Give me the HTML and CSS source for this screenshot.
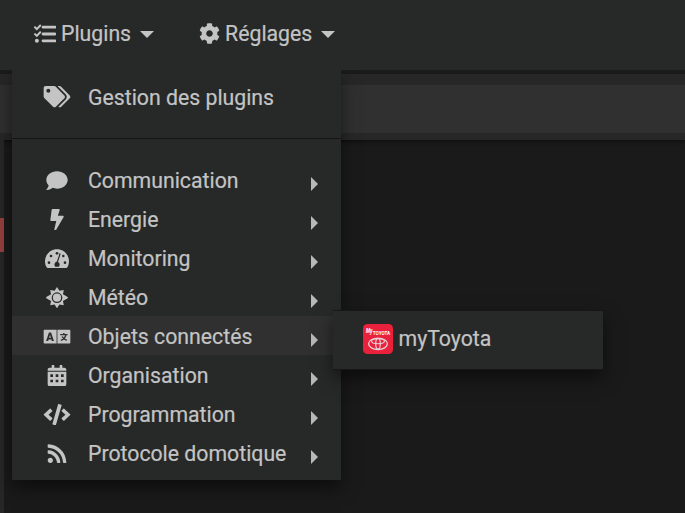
FILE: index.html
```html
<!DOCTYPE html>
<html lang="fr">
<head>
<meta charset="utf-8">
<title>Plugins</title>
<link rel="stylesheet" href="styles.css">
</head>
<body>
<header class="navbar">
  <div class="nav-item">
    <svg class="nav-icon list" viewBox="0 0 22 20"><path d="M9 3.2h12M9 10h12M9 16.8h12" stroke-width="2.8" stroke-linecap="round"/><path d="M1 3.3l1.8 1.8L6.2 1.5M1 10.1l1.8 1.8 3.4-3.6" stroke-width="2" stroke-linecap="round"/><circle cx="2.9" cy="16.8" r="2" class="solid"/></svg>
    <span class="nav-label">Plugins</span><i class="caret"></i>
  </div>
  <div class="nav-item settings">
    <svg class="nav-icon cog" viewBox="0 0 512 512"><path class="solid" d="M487.4 315.7l-42.6-24.6c4.3-23.2 4.3-47 0-70.2l42.6-24.6c4.9-2.8 7.1-8.6 5.5-14-11.1-35.6-30-67.8-54.7-94.6-3.8-4.1-10-5.1-14.8-2.3L380.8 110c-17.9-15.4-38.5-27.3-60.8-35.1V25.8c0-5.6-3.9-10.5-9.4-11.7-36.7-8.2-74.3-7.8-109.2 0-5.5 1.2-9.4 6.1-9.4 11.7V75c-22.2 7.9-42.8 19.8-60.8 35.1L88.7 85.5c-4.9-2.8-11-1.9-14.8 2.3-24.7 26.7-43.6 58.9-54.7 94.6-1.7 5.4.6 11.2 5.5 14L67.3 221c-4.3 23.2-4.3 47 0 70.2l-42.6 24.6c-4.9 2.8-7.1 8.6-5.5 14 11.1 35.6 30 67.8 54.7 94.6 3.8 4.1 10 5.1 14.8 2.3l42.6-24.6c17.9 15.4 38.5 27.3 60.8 35.1v49.2c0 5.6 3.9 10.5 9.4 11.7 36.7 8.2 74.3 7.8 109.2 0 5.5-1.2 9.4-6.1 9.4-11.7v-49.2c22.2-7.9 42.8-19.8 60.8-35.1l42.6 24.6c4.9 2.8 11 1.9 14.8-2.3 24.7-26.7 43.6-58.9 54.7-94.6 1.5-5.5-.7-11.3-5.6-14.1zM256 336c-44.1 0-80-35.9-80-80s35.9-80 80-80 80 35.9 80 80-35.9 80-80 80z"/></svg>
    <span class="nav-label">Réglages</span><i class="caret"></i>
  </div>
</header>
<div class="toolbar"></div>
<main class="content"><aside class="rail"><div class="alert"></div></aside></main>

<nav class="menu">
  <div class="item manage">
    <svg class="icon" viewBox="0 0 640 512"><path d="M497.941 225.941L286.059 14.059A48 48 0 0 0 252.118 0H48C21.49 0 0 21.49 0 48v204.118a48 48 0 0 0 14.059 33.941l211.882 211.882c18.744 18.745 49.136 18.746 67.882 0l204.118-204.118c18.745-18.745 18.745-49.137 0-67.882zM112 160c-26.51 0-48-21.49-48-48s21.49-48 48-48 48 21.49 48 48-21.49 48-48 48zm513.941 133.823L421.823 497.941c-18.745 18.745-49.137 18.745-67.882 0l-.36-.36L527.64 323.522c16.999-16.999 26.36-39.6 26.36-63.64s-9.362-46.641-26.36-63.64L331.397 0h48.721a48 48 0 0 1 33.941 14.059l211.882 211.882c18.745 18.745 18.745 49.137 0 67.882z"/></svg>
    <span class="label">Gestion des plugins</span>
  </div>
  <div class="categories">
    <div class="item">
      <svg class="icon" viewBox="0 0 512 512"><path d="M256 32C114.6 32 0 125.1 0 240c0 49.6 21.4 95 57 130.7C44.5 421.1 2.7 466 2.2 466.5c-2.2 2.3-2.8 5.7-1.5 8.7S4.8 480 8 480c66.3 0 116-31.8 140.6-51.4 32.7 12.3 69 19.4 107.4 19.4 141.4 0 256-93.1 256-208S397.4 32 256 32z"/></svg>
      <span class="label">Communication</span><i class="arrow"></i>
    </div>
    <div class="item">
      <svg class="icon" viewBox="0 0 320 512"><path d="M296 160H180.6l42.6-129.8C227.2 15 215.7 0 200 0H56C44 0 33.8 8.9 32.2 20.8l-32 240C-1.7 275.2 9.5 288 24 288h118.7L96.6 482.5c-3.6 15.2 8 29.5 23.3 29.5 8.4 0 16.4-4.4 20.8-12l176-304c9.3-15.9-2.2-36-20.7-36z"/></svg>
      <span class="label">Energie</span><i class="arrow"></i>
    </div>
    <div class="item">
      <svg class="icon" viewBox="0 0 576 512"><path d="M288 32C129 32 0 161 0 320c0 53 14 102 39 145 6 9 16 15 27 15h444c11 0 21-6 27-15 25-43 39-92 39-145C576 161 447 32 288 32z"/><g class="hole"><circle cx="288" cy="128" r="32"/><circle cx="144" cy="192" r="32"/><circle cx="96" cy="352" r="32"/><circle cx="480" cy="352" r="32"/><circle cx="440" cy="192" r="30"/><path d="M357 119c13 4 20 18 16 31l-61 184c28 13 45 45 38 78-3 13-9 25-18 36h-88c-35-43-14-110 41-125l61-184c2-8 5-21 11-20z"/></g></svg>
      <span class="label">Monitoring</span><i class="arrow"></i>
    </div>
    <div class="item">
      <svg class="icon" viewBox="0 0 512 512"><path d="M256 0l58 91 105-20-20 105 113 66c8 6 8 22 0 28l-113 66 20 105-105-20-58 91-58-91-105 20 20-105L0 270c-8-6-8-22 0-28l113-66L93 71l105 20z"/><circle class="hole" cx="256" cy="256" r="128"/><circle cx="256" cy="256" r="98"/></svg>
      <span class="label">Météo</span><i class="arrow"></i>
    </div>
    <div class="item active">
      <svg class="icon" viewBox="0 0 640 512"><path d="M24 92h286v328H24c-13 0-24-11-24-24V116c0-13 11-24 24-24zM330 92h286c13 0 24 11 24 24v280c0 13-11 24-24 24H330z"/><path class="hole" fill-rule="evenodd" d="M126 154h52l68 204h-50l-10-36h-68l-10 36H58zm26 64l-21 62h42z"/><path class="cut" d="M396 208h176M484 166v42M534 212c-15 62-58 106-121 134M442 252c20 42 60 74 112 94"/></svg>
      <span class="label">Objets connectés</span><i class="arrow"></i>
    </div>
    <div class="item">
      <svg class="icon" viewBox="0 0 448 512"><path fill-rule="evenodd" d="M0 160h448v304c0 26-22 48-48 48H48c-26 0-48-22-48-48zM64 224v64h64v-64zM192 224v64h64v-64zM320 224v64h64v-64zM64 352v64h64v-64zM192 352v64h64v-64zM320 352v64h64v-64zM48 64h48V12c0-7 5-12 12-12h40c7 0 12 5 12 12v52h128V12c0-7 5-12 12-12h40c7 0 12 5 12 12v52h48c26 0 48 22 48 48v24H0v-24c0-26 22-48 48-48z"/></svg>
      <span class="label">Organisation</span><i class="arrow"></i>
    </div>
    <div class="item">
      <svg class="icon" viewBox="0 0 640 512"><path d="M278.9 511.5l-61-17.7c-6.4-1.8-10-8.5-8.2-14.9L346.2 8.7c1.8-6.4 8.5-10 14.9-8.2l61 17.7c6.4 1.8 10 8.5 8.2 14.9L293.8 503.3c-1.9 6.4-8.5 10.1-14.9 8.2zm-114-112.2l43.5-46.4c4.6-4.9 4.3-12.7-.8-17.2L117 256l90.6-79.7c5.1-4.5 5.5-12.3.8-17.2l-43.5-46.4c-4.5-4.8-12.1-5.1-17-.5L3.8 247.2c-5.1 4.7-5.1 12.8 0 17.5l144.1 135.1c4.9 4.6 12.5 4.4 17-.5zm327.2.6l144.1-135.1c5.1-4.7 5.1-12.8 0-17.5L492.1 112.1c-4.8-4.5-12.4-4.3-17 .5L431.6 159c-4.6 4.9-4.3 12.7.8 17.2L523 256l-90.6 79.7c-5.1 4.5-5.5 12.3-.8 17.2l43.5 46.4c4.5 4.9 12.1 5.1 17 .6z"/></svg>
      <span class="label">Programmation</span><i class="arrow"></i>
    </div>
    <div class="item">
      <svg class="icon" viewBox="0 0 448 512"><path d="M128.081 415.959c0 35.369-28.672 64.041-64.041 64.041S0 451.328 0 415.959s28.672-64.041 64.041-64.041 64.04 28.673 64.04 64.041zm175.66 47.25c-8.354-154.6-132.185-278.587-286.95-286.95C7.656 175.765 0 183.105 0 192.253v48.069c0 8.415 6.49 15.472 14.887 16.018 111.832 7.284 201.473 96.702 208.772 208.772.547 8.397 7.604 14.887 16.018 14.887h48.069c9.149.001 16.489-7.655 15.995-16.79zm144.249.288C439.596 229.677 251.465 40.445 16.503 32.01 7.473 31.686 0 38.981 0 48.016v48.068c0 8.625 6.835 15.645 15.453 15.999 191.179 7.839 344.627 161.316 352.465 352.465.353 8.618 7.373 15.453 15.999 15.453h48.068c9.034-.001 16.329-7.474 16.005-16.504z"/></svg>
      <span class="label">Protocole domotique</span><i class="arrow"></i>
    </div>
  </div>
</nav>

<div class="submenu">
  <svg class="logo" viewBox="0 0 30 30">
    <rect width="30" height="30" rx="4.5" fill="#e9213c"/>
    <text x="3" y="8.8" class="logo-my" textLength="6.4" lengthAdjust="spacingAndGlyphs">My</text><text x="9.8" y="11.4" class="logo-name" textLength="17.4" lengthAdjust="spacingAndGlyphs">TOYOTA</text>
    <g fill="none" stroke="#e6d3d7"><ellipse cx="15" cy="19.8" rx="9.4" ry="5.7" stroke-width="1.3"/><ellipse cx="15" cy="17.3" rx="6.4" ry="2.5" stroke-width="1.1"/><ellipse cx="15" cy="19.8" rx="2.3" ry="5.3" stroke-width="1.2"/></g>
  </svg>
  <span class="sub-label">myToyota</span>
</div>
</body>
</html>
```
FILE: styles.css
```css
* { box-sizing: border-box; }

body {
  margin: 0;
  height: 513px;
  overflow: hidden;
  display: flex;
  flex-direction: column;
  background: #1a1a1a;
  color: #c4c4c4;
  font: 21.25px/39px Roboto, sans-serif;
  -webkit-text-stroke: .2px #c4c4c4;
}

.navbar {
  display: flex;
  flex: none;
  height: 74px;
  padding: 14px 0 0 34px;
  background: #272928;
  border-bottom: 4px solid #1b1c1b;
}

.nav-item { display: flex; align-items: center; height: 39px; white-space: nowrap; }
.settings { margin-left: 45px; }
.nav-icon { fill: none; stroke: #c4c4c4; flex: none; }
.list { width: 22px; height: 20px; margin-right: 5px; }
.cog { width: 21px; height: 21px; margin-right: 5px; stroke: none; }
.solid { fill: #c4c4c4; stroke: none; }

.caret {
  margin-left: 9px;
  margin-top: 2px;
  border: 7px solid transparent;
  border-top-color: #c4c4c4;
  border-bottom: 0;
}

.toolbar {
  flex: none;
  height: 66px;
  border: solid #272727;
  border-width: 11px 0 7px;
  background: #303030;
  box-shadow: 0 2px 4px rgba(0, 0, 0, .45);
}

.content { flex: 1; }
.rail { width: 4px; height: 100%; padding-top: 78px; background: #272727; }
.alert { height: 34px; background: #96403f; }

.menu {
  position: absolute;
  left: 12px;
  top: 70px;
  width: 329px;
  height: 410px;
  background: #272928;
  box-shadow: 0 8px 16px rgba(0, 0, 0, .5);
  clip-path: inset(0 -40px -40px -40px);
}

.item { display: flex; align-items: center; height: 39px; padding: 2px 23px 0 31px; }
.manage { height: 69px; padding: 0 23px 14px 31px; border-bottom: 1px solid #151515; }
.categories { padding-top: 21px; }
.active { background: #303030; }
.icon { width: 28px; height: 21.33px; margin-right: 17px; fill: #c4c4c4; flex: none; }
.hole { fill: #272928; }
.active .hole { fill: #303030; }
.cut { fill: none; stroke: #303030; stroke-width: 34px; }
.label { flex: 1; white-space: nowrap; }

.arrow {
  margin-top: 7px;
  border: 7px solid transparent;
  border-left-color: #b8b8b8;
  border-right: 0;
}

.submenu {
  position: absolute;
  left: 333px;
  top: 310px;
  width: 270px;
  height: 60px;
  display: flex;
  align-items: flex-start;
  padding: 13px 30px 0;
  background: #272928;
  border: solid #171717;
  border-width: 1px 0;
  box-shadow: 0 8px 16px rgba(0, 0, 0, .5);
}

.logo { width: 30px; height: 30px; margin-right: 5.5px; -webkit-text-stroke: 0; }
.sub-label { line-height: 30px; }
.logo-my { font: italic 700 6.5px Roboto, sans-serif; fill: #fff; }
.logo-name { font: 700 4.8px Roboto, sans-serif; fill: #fff; }
```
